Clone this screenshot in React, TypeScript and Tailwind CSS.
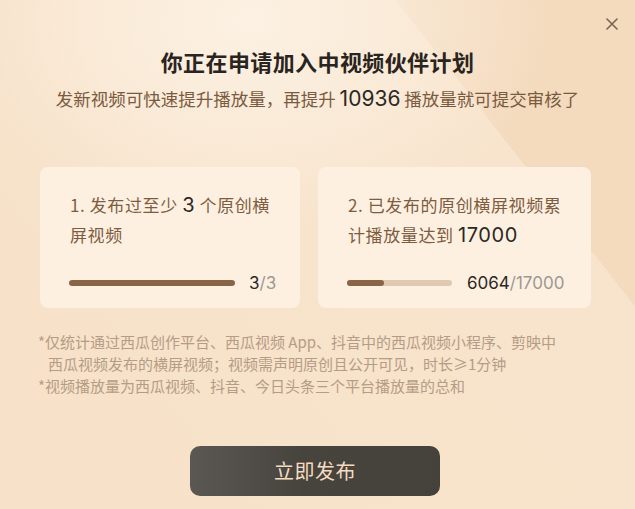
export default function App() {
  const cjk = "font-['Noto_Sans_CJK_SC','Noto_Sans',sans-serif]";
  const num = "font-['Inter','Noto_Sans_CJK_SC',sans-serif]";

  return (
    <div
      className={`relative w-[635px] h-[509px] overflow-hidden bg-[#f6dec3] bg-[radial-gradient(ellipse_300px_220px_at_250px_20px,#fcf1e3_0%,rgba(252,241,227,0.55)_50%,rgba(252,241,227,0)_100%),linear-gradient(52deg,rgba(255,248,238,0.12)_0%,rgba(255,248,238,0.22)_76.8%,rgba(236,208,174,0.22)_76.8%,rgba(236,208,174,0.22)_100%)] ${cjk}`}
    >
      {/* close */}
      <button className="absolute top-[18px] right-[17px] w-[12px] h-[12px]">
        <svg viewBox="0 0 12 12" width="12" height="12">
          <path d="M1 1L11 11M11 1L1 11" stroke="#7a6550" strokeWidth="1.6" strokeLinecap="round" />
        </svg>
      </button>

      {/* header */}
      <div className="pt-[46px] text-center">
        <h1 className="text-[22px] leading-[30px] font-bold text-[#2a2420] tracking-[0.4px]">
          你正在申请加入中视频伙伴计划
        </h1>
        <p className="mt-[9px] text-[17.5px] leading-[28px] text-[#7a5b40]">
          发新视频可快速提升播放量，再提升{" "}
          <span className={`${num} text-[21px] text-[#2b2825]`}>10936</span>{" "}
          播放量就可提交审核了
        </p>
      </div>

      {/* task cards */}
      <div className="mt-[54px] pl-[40px] grid grid-cols-[260px_273px] gap-[18px]">
        <div className="h-[141px] rounded-[8px] bg-[#fdf0e1] pl-[29px] pr-[20px] pt-[23px]">
          <p className="whitespace-nowrap pl-[1px] text-[17px] leading-[30px] tracking-[0.6px] text-[#7d5d42]">
            1. 发布过至少 <span className={`${num} text-[20px] text-[#2b2825]`}>3</span> 个原创横
            <br />
            屏视频
          </p>
          <div className="mt-[21px] flex items-center gap-[14px]">
            <div className="w-[166px] h-[6px] rounded-full bg-[#8a6446]" />
            <span className={`${num} text-[17px] leading-[24px] text-[#2b2825]`}>
              3<span className="text-[#9c9893]">/3</span>
            </span>
          </div>
        </div>

        <div className="h-[141px] rounded-[8px] bg-[#fdf0e1] pl-[29px] pr-[20px] pt-[23px]">
          <p className="whitespace-nowrap pl-[1px] text-[17px] leading-[30px] tracking-[0.6px] text-[#7d5d42]">
            2. 已发布的原创横屏视频累
            <br />
            计播放量达到 <span className={`${num} text-[20px] text-[#2b2825]`}>17000</span>
          </p>
          <div className="mt-[21px] flex items-center gap-[15px]">
            <div className="w-[105px] h-[6px] rounded-full bg-[#dfc9b0]">
              <div className="h-full rounded-full bg-[#8a6446]" style={{ width: `${(6064 / 17000) * 100}%` }} />
            </div>
            <span className={`${num} text-[17px] leading-[24px] text-[#2b2825]`}>
              6064<span className="text-[#9c9893]">/17000</span>
            </span>
          </div>
        </div>
      </div>

      {/* notes */}
      <div className="mt-[23px] pl-[38px] text-[15px] leading-[22px] text-[#b59c86]">
        <p>*仅统计通过西瓜创作平台、西瓜视频 App、抖音中的西瓜视频小程序、剪映中</p>
        <p className="pl-[10px]">西瓜视频发布的横屏视频；视频需声明原创且公开可见，时长≥1分钟</p>
        <p>*视频播放量为西瓜视频、抖音、今日头条三个平台播放量的总和</p>
      </div>

      {/* action */}
      <div className="mt-[49px] pl-[190px] flex">
        <button className="w-[250px] h-[50px] rounded-[10px] bg-[linear-gradient(90deg,#5b5854_0%,#47433d_45%,#45413b_100%)] text-[20px] text-[#f5dcc0] tracking-[0.5px]">
          立即发布
        </button>
      </div>
    </div>
  );
}
